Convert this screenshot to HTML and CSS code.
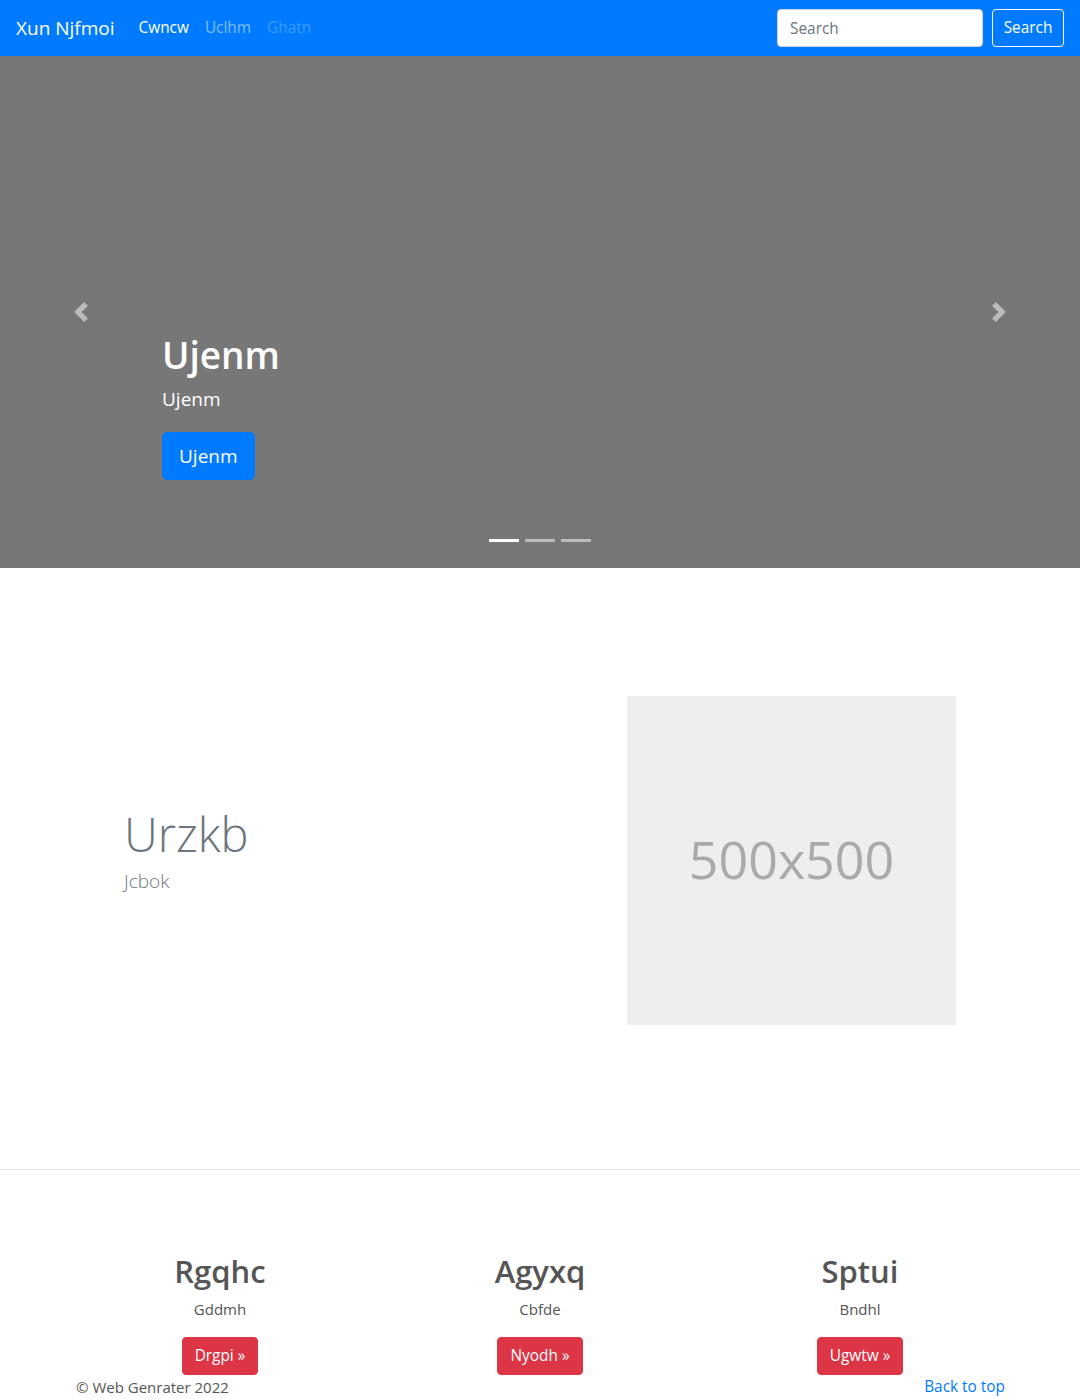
FILE: index.html
```html
<!DOCTYPE html>
<html lang="en">
<head>
<meta charset="utf-8">
<title>Xun Njfmoi</title>
<link rel="stylesheet" href="styles.css">
</head>
<body>
<header class="navbar">
  <a class="brand" href="#">Xun Njfmoi</a>
  <nav class="nav">
    <a class="nav-link active" href="#">Cwncw</a>
    <a class="nav-link" href="#">Uclhm</a>
    <a class="nav-link disabled" href="#">Ghatn</a>
  </nav>
  <form class="search">
    <input class="search-input" type="text" placeholder="Search">
    <button class="btn-outline" type="button">Search</button>
  </form>
</header>

<section class="carousel">
  <a class="control" href="#" aria-label="Previous">
    <svg viewBox="0 0 8 8" width="20" height="20"><path fill="#fff" d="M5.25 0l-4 4 4 4 1.5-1.5L4.25 4l2.5-2.5L5.25 0z"/></svg>
  </a>
  <div class="caption">
    <h1 class="caption-title">Ujenm</h1>
    <p class="caption-text">Ujenm</p>
    <a class="btn-primary-lg" href="#">Ujenm</a>
  </div>
  <a class="control" href="#" aria-label="Next">
    <svg viewBox="0 0 8 8" width="20" height="20"><path fill="#fff" d="M2.75 0l-1.5 1.5L3.75 4l-2.5 2.5L2.75 8l4-4-4-4z"/></svg>
  </a>
  <ol class="indicators">
    <li class="indicator active"></li>
    <li class="indicator"></li>
    <li class="indicator"></li>
  </ol>
</section>

<section class="featurette">
  <div class="featurette-text">
    <h2 class="featurette-heading">Urzkb</h2>
    <p class="lead">Jcbok</p>
  </div>
  <div class="placeholder">500x500</div>
</section>

<hr class="divider">

<section class="marketing">
  <div class="col">
    <h2 class="col-title">Rgqhc</h2>
    <p class="col-text">Gddmh</p>
    <a class="btn-danger" href="#">Drgpi &raquo;</a>
  </div>
  <div class="col">
    <h2 class="col-title">Agyxq</h2>
    <p class="col-text">Cbfde</p>
    <a class="btn-danger" href="#">Nyodh &raquo;</a>
  </div>
  <div class="col">
    <h2 class="col-title">Sptui</h2>
    <p class="col-text">Bndhl</p>
    <a class="btn-danger" href="#">Ugwtw &raquo;</a>
  </div>
</section>

<footer class="footer">
  <p class="copy">&copy; Web Genrater 2022</p>
  <a class="top-link" href="#">Back to top</a>
</footer>
</body>
</html>
```

FILE: styles.css
```css
* { box-sizing: border-box; }
html, body { margin: 0; padding: 0; }
body {
  font-family: "Open Sans", "Noto Sans", "Liberation Sans", sans-serif;
  font-size: 16px;
  line-height: 1.5;
  color: #212529;
  background: #fff;
  overflow: hidden;
}
a { text-decoration: none; }

/* navbar */
.navbar {
  height: 56px;
  background: #007bff;
  display: flex;
  align-items: center;
  padding: 0 16px;
}
.brand {
  color: #fff;
  font-size: 19px;
  line-height: 30px;
  margin-right: 16px;
}
.nav { display: flex; flex: 1; }
.nav-link {
  padding: 8px;
  color: rgba(255,255,255,.5);
  font-size: 15.4px;
  line-height: 24px;
}
.nav-link.active { color: #fff; }
.nav-link.disabled { color: rgba(255,255,255,.25); }
.search { display: flex; align-items: center; gap: 9px; }
.search-input {
  width: 206px;
  height: 38px;
  padding: 6px 12px;
  font: inherit;
  font-size: 15.4px;
  color: #495057;
  background: #fff;
  border: 1px solid #ced4da;
  border-radius: 4px;
}
.search-input::placeholder { color: #6c757d; }
.btn-outline {
  width: 72px;
  height: 38px;
  padding: 6px 0;
  font: inherit;
  font-size: 15.4px;
  color: #fff;
  background: transparent;
  border: 1px solid #fff;
  border-radius: 4px;
}

/* carousel */
.carousel {
  position: relative;
  height: 512px;
  background: #777;
  display: grid;
  grid-template-columns: 162px 1fr 162px;
}
.control {
  display: flex;
  align-items: center;
  justify-content: center;
  opacity: .5;
}
.caption {
  align-self: end;
  padding-bottom: 88px;
  color: #fff;
  display: flex;
  flex-direction: column;
  align-items: flex-start;
}
.caption-title {
  margin: 0 0 6px;
  font-size: 37px;
  font-weight: 600;
  line-height: 46px;
}
.caption-text {
  margin: 0 0 18px;
  font-size: 19px;
  line-height: 30px;
}
.btn-primary-lg {
  display: inline-block;
  background: #007bff;
  color: #fff;
  font-size: 19px;
  line-height: 30px;
  padding: 8px 16px;
  border: 1px solid #007bff;
  border-radius: 5px;
}
.indicators {
  position: absolute;
  left: 0;
  right: 0;
  bottom: 26px;
  margin: 0;
  padding: 0;
  list-style: none;
  display: flex;
  justify-content: center;
  gap: 6px;
}
.indicator {
  width: 30px;
  height: 3px;
  background: #fff;
  opacity: .5;
}
.indicator.active { opacity: 1; }

/* featurette */
.featurette {
  display: flex;
  align-items: center;
  justify-content: space-between;
  padding: 128px 124px 144px 124px;
}
.featurette-text { padding-bottom: 14px; }
.featurette-heading {
  margin: 0 0 8px;
  font-size: 47px;
  font-weight: 300;
  line-height: 1;
  color: #6c757d;
}
.lead {
  margin: 0;
  font-size: 19px;
  font-weight: 300;
  line-height: 30px;
  color: #6c757d;
}
.placeholder {
  width: 329px;
  height: 329px;
  background: #eee;
  color: #aaa;
  font-size: 52px;
  display: flex;
  align-items: center;
  justify-content: center;
  padding-bottom: 4px;
}

.divider {
  margin: 0;
  border: 0;
  border-top: 1px solid #e3e3e3;
}

/* marketing */
.marketing {
  display: grid;
  grid-template-columns: repeat(3, 320px);
  justify-content: center;
  padding-top: 82px;
}
.col {
  display: flex;
  flex-direction: column;
  align-items: center;
  text-align: center;
}
.col-title {
  margin: 0 0 7px;
  font-size: 31px;
  font-weight: 600;
  line-height: 38px;
  color: #555;
}
.col-text {
  margin: 0 0 16px;
  font-size: 15px;
  line-height: 24px;
  color: #555;
}
.btn-danger {
  display: inline-block;
  background: #dc3545;
  color: #fff;
  padding: 6px 12px;
  font-size: 15.4px;
  line-height: 24px;
  border: 1px solid #dc3545;
  border-radius: 4px;
}

.footer {
  display: flex;
  justify-content: space-between;
  padding: 0 75px 0 76px;
}
.copy { margin: 0; color: #555; font-size: 15px; line-height: 24px; }
.top-link { color: #007bff; font-size: 15.4px; line-height: 24px; }
```
